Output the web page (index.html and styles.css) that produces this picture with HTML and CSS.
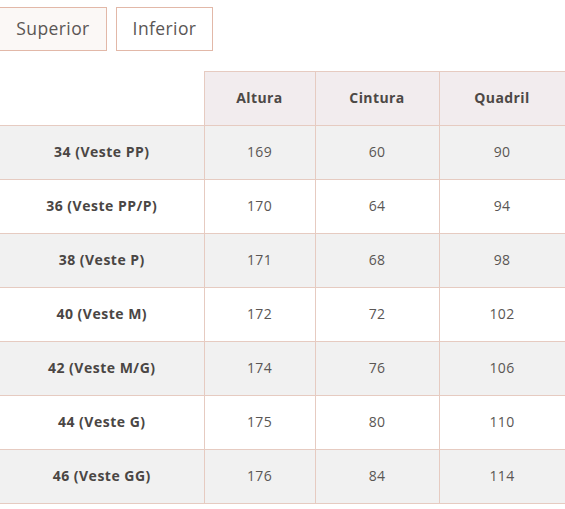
FILE: index.html
```html
<!DOCTYPE html>
<html lang="pt">
<head>
<meta charset="utf-8">
<link rel="stylesheet" href="styles.css">
</head>
<body>
<div class="page">
  <div class="tabs">
    <button class="tab active">Superior</button>
    <button class="tab">Inferior</button>
  </div>
  <table class="sizes">
    <colgroup>
      <col class="c-size"><col class="c-alt"><col class="c-cin"><col class="c-qua">
    </colgroup>
    <thead>
      <tr><th class="blank"></th><th>Altura</th><th>Cintura</th><th>Quadril</th></tr>
    </thead>
    <tbody>
      <tr><th>34 (Veste PP)</th><td>169</td><td>60</td><td>90</td></tr>
      <tr><th>36 (Veste PP/P)</th><td>170</td><td>64</td><td>94</td></tr>
      <tr><th>38 (Veste P)</th><td>171</td><td>68</td><td>98</td></tr>
      <tr><th>40 (Veste M)</th><td>172</td><td>72</td><td>102</td></tr>
      <tr><th>42 (Veste M/G)</th><td>174</td><td>76</td><td>106</td></tr>
      <tr><th>44 (Veste G)</th><td>175</td><td>80</td><td>110</td></tr>
      <tr><th>46 (Veste GG)</th><td>176</td><td>84</td><td>114</td></tr>
    </tbody>
  </table>
</div>
</body>
</html>
```
FILE: styles.css
```css
html, body { margin: 0; padding: 0; background: #fff; }
body { font-family: "Open Sans", "Liberation Sans", sans-serif; color: #555; overflow: hidden; }
.page { width: 565px; }
.tabs { display: flex; gap: 9px; padding-top: 7px; margin-left: -1px; height: 44px; margin-bottom: 20px; }
.tab {
  font-family: inherit; font-size: 17.5px; color: #5a5654; letter-spacing: 0.4px;
  background: #fff; border: 1px solid #e2b8a8; padding: 0 0 2px;
  height: 44px; cursor: pointer;
}
.tab.active { background: #fbf8f6; width: 108px; }
.tab:not(.active) { width: 97px; }
.sizes { border-collapse: collapse; table-layout: fixed; width: 565px; }
.c-size { width: 204px; }
.c-alt { width: 111px; }
.c-cin { width: 124px; }
.c-qua { width: 126px; }
.sizes th, .sizes td {
  height: 51px; padding: 0 0 2px; text-align: center; vertical-align: middle;
  border: 1px solid #e6cbc1; font-size: 14px;
}
.sizes thead th { background: #f2ecee; color: #4d4846; font-weight: 700; letter-spacing: 0.4px; }
.sizes thead th.blank { background: #fff; border: none; border-bottom: 1px solid #e6cbc1; }
.sizes tbody th { font-weight: 700; color: #4a4644; border-left: none; letter-spacing: 0.5px; }
.sizes td { color: #5a5654; letter-spacing: 0.3px; }
.sizes tbody tr:nth-child(odd) { background: #f1f1f1; }
.sizes tbody tr:nth-child(even) { background: #fff; }
```
